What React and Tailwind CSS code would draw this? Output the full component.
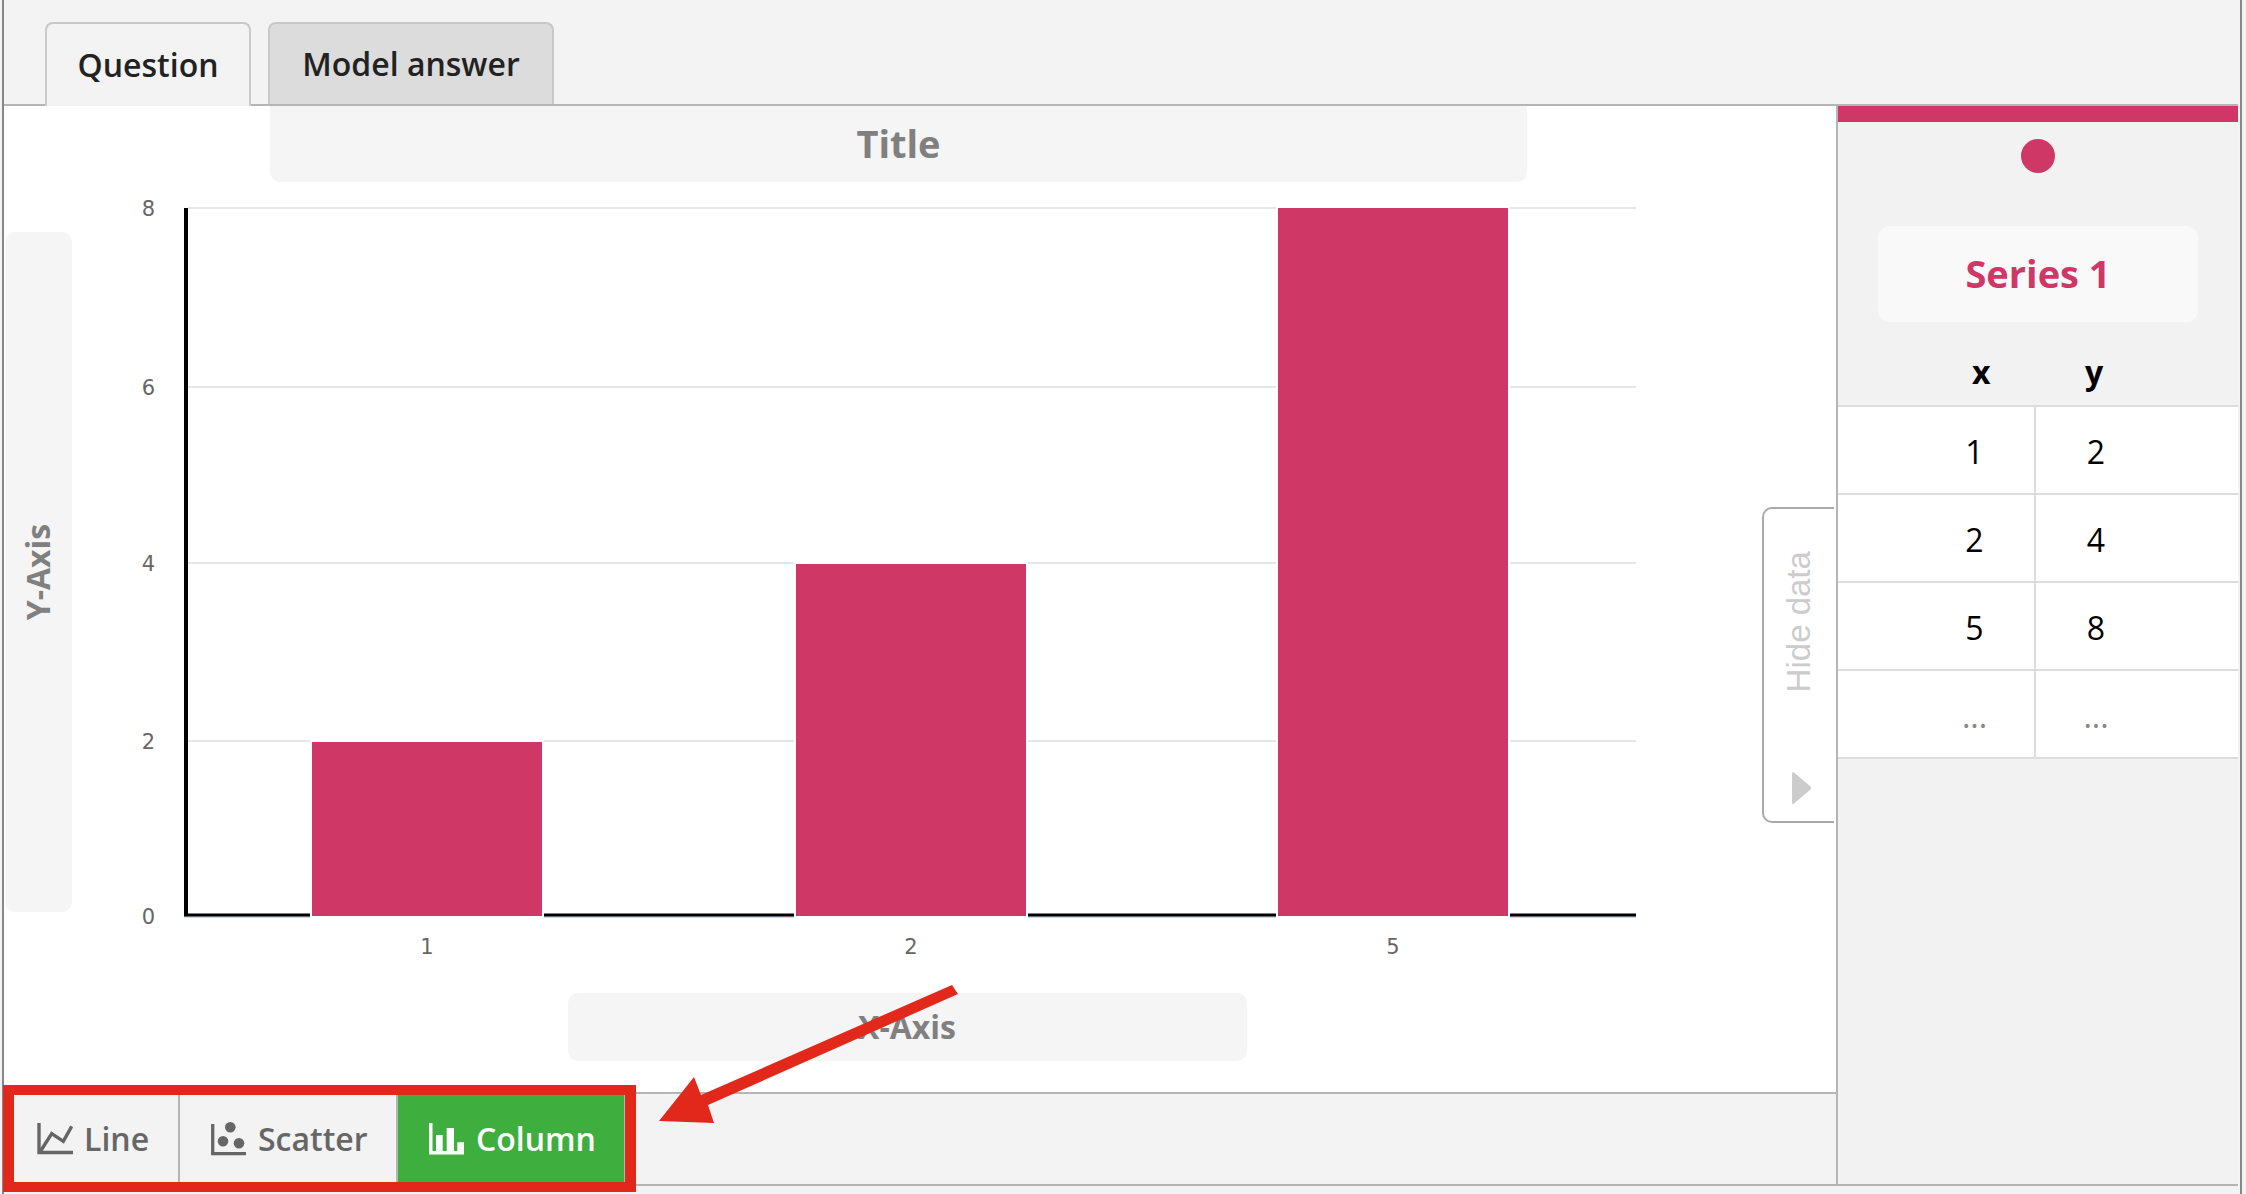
import React from "react";

const font = { open: "font-['Open_Sans',sans-serif]" };
const pink = "#cf3866";

// y gridlines and bars are in page coordinates, svg viewBox starts at the chart row
const gridLines = [
  { label: "8", y: 208 },
  { label: "6", y: 387 },
  { label: "4", y: 563 },
  { label: "2", y: 741 },
];

const bars = [
  { label: "1", x: 311, top: 742 },
  { label: "2", x: 795, top: 564 },
  { label: "5", x: 1277, top: 208 },
];

const rows = [
  ["1", "2"],
  ["2", "4"],
  ["5", "8"],
  ["...", "..."],
];

const Chart = () => (
  <svg width="1680" height="800" viewBox="72 182 1680 800" className="block shrink-0">
    {gridLines.map((g) => (
      <g key={g.label}>
        <line x1="188" x2="1636" y1={g.y} y2={g.y} stroke="#e6e6e6" strokeWidth="2" />
        <text x="155" y={g.y + 8} textAnchor="end" fontFamily="'DejaVu Sans', sans-serif" fontSize="21" fill="#666666">
          {g.label}
        </text>
      </g>
    ))}
    <text x="155" y="924" textAnchor="end" fontFamily="'DejaVu Sans', sans-serif" fontSize="21" fill="#666666">
      0
    </text>
    <line x1="184" x2="1636" y1="917" y2="917" stroke="#ccd6eb" strokeWidth="2" />
    <line x1="184" x2="1636" y1="915" y2="915" stroke="#000000" strokeWidth="3" />
    <line x1="186" x2="186" y1="208" y2="916" stroke="#000000" strokeWidth="4" />
    {bars.map((b) => (
      <g key={b.label}>
        <rect x={b.x} y={b.top - 1} width="232" height={918 - b.top} fill={pink} stroke="#ffffff" strokeWidth="2" />
        <text x={b.x + 116} y="954" textAnchor="middle" fontFamily="'DejaVu Sans', sans-serif" fontSize="21" fill="#666666">
          {b.label}
        </text>
      </g>
    ))}
  </svg>
);

const LineIcon = () => (
  <svg width="36" height="32" viewBox="0 0 36 32" fill="none" stroke="#666666" strokeWidth="3.4">
    <path d="M2 0v29.5h34" />
    <path d="M3 29L14.7 10.7l11.6 7.6L34.7 3.3" />
  </svg>
);

const ScatterIcon = () => (
  <svg width="35" height="34" viewBox="0 0 35 34" fill="none">
    <path d="M1.7 2v29.7H35" stroke="#666666" strokeWidth="3.3" />
    <circle cx="19.3" cy="5.3" r="5.3" fill="#666666" />
    <circle cx="12" cy="19.3" r="5.3" fill="#666666" />
    <circle cx="28" cy="21.3" r="5.3" fill="#666666" />
  </svg>
);

const ColumnIcon = () => (
  <svg width="35" height="32" viewBox="0 0 35 32" fill="#ffffff">
    <path d="M0 0h3.5v28H35v3.5H0z" />
    <path d="M7 12h6.7v17H7zM17.7 5H25v24h-7.3zM28.3 19.3H35V29h-6.7z" />
  </svg>
);

const App = () => {
  return (
    <div className={`relative h-[1194px] w-full overflow-hidden bg-[#f3f3f3] pl-[2px] pr-[4px] ${font.open}`}>
      <div className="flex h-[1194px] flex-col border-x-2 border-[#888888]">
        {/* tabs */}
        <div className="flex h-[104px] shrink-0 items-end gap-[17px] pl-[41px] pt-[22px] text-[32px] font-semibold text-[#222222]">
          <div className="relative top-[2px] z-10 flex h-[84px] w-[206px] items-center justify-center rounded-t-[8px] border-2 border-b-0 border-[#c8c8c8] bg-[#f3f3f3]">
            Question
          </div>
          <div className="flex h-[82px] w-[286px] items-center justify-center rounded-t-[8px] border-2 border-b-0 border-[#c8c8c8] bg-[#dcdcdc]">
            Model answer
          </div>
        </div>

        <div className="flex h-[1082px] w-[2234px] border-y-2 border-[#b5b5b5]">
          {/* chart side */}
          <div className="flex w-[1832px] shrink-0 flex-col">
            <div className="relative flex h-[986px] flex-col bg-white">
              <div className="ml-[266px] flex h-[76px] w-[1257px] items-center justify-center rounded-b-[10px] bg-[#f5f5f5] pb-[2px] text-[38px] font-bold text-[#808080]">
                Title
              </div>
              <div className="flex h-[800px]">
                <div className="ml-px mt-[50px] flex h-[680px] w-[67px] items-center justify-center rounded-[10px] bg-[#f5f5f5]">
                  <span className="-rotate-90 whitespace-nowrap text-[32px] font-bold text-[#808080]">Y-Axis</span>
                </div>
                <Chart />
              </div>
              <div className="ml-[564px] mt-[11px] flex h-[68px] w-[679px] items-center justify-center rounded-[10px] bg-[#f5f5f5] text-[32px] font-bold text-[#808080]">
                <span className="ml-[-1px]">X-Axis</span>
              </div>

              {/* collapse tab lies over the chart */}
              <div className="absolute right-[2px] top-[401px] flex h-[316px] w-[72px] flex-col items-center justify-between rounded-l-[10px] border-2 border-r-0 border-[#aaaaaa] bg-white pb-[16px] pt-[43px]">
                <div className="flex h-[139px] items-center justify-center">
                  <span className="-rotate-90 whitespace-nowrap font-['Liberation_Sans',sans-serif] text-[33px] text-[#cccccc]">
                    Hide data
                  </span>
                </div>
                <svg width="20" height="34" viewBox="0 0 20 34" fill="#cccccc" className="ml-[5px]">
                  <path d="M2 1.5L18.5 15.5Q20 17 18.5 18.5L2 32.5Q0 34 0 31.5V2.5Q0 0 2 1.5z" />
                </svg>
              </div>
            </div>

            {/* chart type buttons */}
            <div className="flex h-[92px] items-stretch border-t-2 border-[#b5b5b5] bg-[#f3f3f3] text-[32px] font-semibold text-[#666666]">
              <div className="flex w-[176px] items-center gap-[11px] border-r-2 border-[#b5b5b5] pl-[33px]">
                <LineIcon />
                <span>Line</span>
              </div>
              <div className="flex w-[218px] items-center gap-[12px] border-r-2 border-[#b5b5b5] pl-[31px]">
                <ScatterIcon />
                <span>Scatter</span>
              </div>
              <div className="flex w-[228px] items-center gap-[12px] border-r-2 border-[#b5b5b5] bg-[#3eae3e] pl-[31px] text-white">
                <ColumnIcon />
                <span>Column</span>
              </div>
            </div>
          </div>

          {/* data side */}
          <div className="flex w-[402px] shrink-0 flex-col items-start border-l-2 border-[#b5b5b5] bg-[#f2f2f2]">
            <div className="h-[16px] w-[400px] bg-[#cf3866]" />
            <div className="ml-[183px] mt-[17px] h-[34px] w-[34px] rounded-full bg-[#cf3866]" />
            <div className="ml-[40px] mt-[53px] flex h-[96px] w-[320px] items-center justify-center rounded-[12px] bg-[#f9f9f9] pb-[2px] text-[38px] font-bold text-[#cf3866]">
              Series 1
            </div>
            <div className="flex h-[83px] w-[400px] items-center pt-[17px] text-[32px] font-bold text-black">
              <span className="ml-[134px] w-[113px]">x</span>
              <span>y</span>
            </div>
            <div className="w-[400px] border-t-2 border-[#dddddd] bg-white text-[32px] text-black">
              {rows.map((r, i) => (
                <div key={i} className="flex h-[88px] border-b-2 border-[#dddddd]">
                  <div className={`flex w-[198px] items-center justify-center border-r-2 border-[#dddddd] pl-[77px] pt-[3px] ${r[0] === "..." ? "text-[#888888]" : ""}`}>
                    {r[0]}
                  </div>
                  <div className={`flex w-[120px] items-center justify-center pt-[3px] ${r[1] === "..." ? "text-[#888888]" : ""}`}>
                    {r[1]}
                  </div>
                </div>
              ))}
            </div>
          </div>
        </div>
      </div>

      {/* red annotation drawn over the screenshot */}
      <div className="absolute left-[3px] top-[1085px] h-[107px] w-[633px] border-x-[11px] border-y-[10px] border-[#e2281b]" />
      <svg className="absolute left-0 top-0" width="2246" height="1194" fill="#e2281b">
        <polygon points="952,985 958,994 708,1105 714,1123 659,1121 694,1077 701,1095" />
      </svg>
    </div>
  );
};

export default App;
